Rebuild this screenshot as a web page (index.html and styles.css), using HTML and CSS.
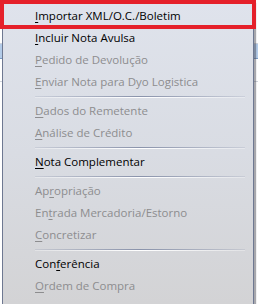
FILE: index.html
```html
<!DOCTYPE html>
<html>
<head>
<meta charset="utf-8">
<link rel="stylesheet" href="styles.css">
</head>
<body>
<div class="backdrop">
  <div class="row r1"></div>
  <div class="row r2"></div>
  <div class="row r3"></div>
</div>
<div class="menu">
  <div class="item"><span class="u">I</span>mportar XML/O.C./Boletim</div>
  <div class="item"><span class="u">I</span>ncluir Nota Avulsa</div>
  <div class="item off"><span class="u">P</span>edido de Devolução</div>
  <div class="item off"><span class="u">E</span>nviar Nota para Dyo Logistica</div>
  <div class="sep"></div>
  <div class="item off"><span class="u">D</span>ados do Remetente</div>
  <div class="item off"><span class="u">A</span>nálise de Crédito</div>
  <div class="sep"></div>
  <div class="item"><span class="u">N</span>ota Complementar</div>
  <div class="sep"></div>
  <div class="item off">Ap<span class="u">r</span>opriação</div>
  <div class="item off">En<span class="u">t</span>rada Mercadoria/Estorno</div>
  <div class="item off"><span class="u">C</span>oncretizar</div>
  <div class="sep"></div>
  <div class="item">Con<span class="u">f</span>erência</div>
  <div class="item off"><span class="u">O</span>rdem de Compra</div>
</div>
<div class="mark"></div>
</body>
</html>
```
FILE: styles.css
```css
html, body {
  margin: 0;
  padding: 0;
  background: #ffffff;
  width: 258px;
  height: 304px;
  overflow: hidden;
}
.backdrop {
  display: flex;
  flex-direction: column;
  width: 258px;
}
.row {
  border-bottom: 1px solid #d0d4dc;
}
.r1 { height: 43px; }
.r2 { height: 14px; background: #b3cbe8; border-bottom: 1px solid #7a9ac4; }
.r3 { height: 22px; }
.menu {
  position: absolute;
  left: 2px;
  top: 1px;
  width: 250px;
  height: 299px;
  box-sizing: content-box;
  border: 1px solid #6e7891;
  background: linear-gradient(to bottom, #dfe3ec 0%, #d9dce3 50%, #d3d3d5 100%);
  box-shadow: 2px 2px 1px rgba(60, 60, 70, 0.45);
  padding-top: 3px;
  font-family: "Open Sans", "Noto Sans", sans-serif;
  font-size: 11.5px;
}
.item {
  height: 22px;
  line-height: 22px;
  padding-left: 32px;
  color: #000000;
  white-space: nowrap;
}
.item.off {
  color: #8d8d8f;
}
.u {
  text-decoration: underline;
  text-underline-offset: 2px;
}
.sep {
  height: 2px;
  margin: 3px 8px 2px 32px;
  background:
    linear-gradient(to right, rgba(138,147,171,0.2), #8a93ab 50%, rgba(138,147,171,0.2)) top / 100% 1px no-repeat,
    linear-gradient(to right, rgba(255,255,255,0.3), #ffffff 50%, rgba(255,255,255,0.3)) bottom / 100% 1px no-repeat;
}
.mark {
  position: absolute;
  left: 0;
  top: 0;
  width: 256px;
  height: 29px;
  box-sizing: border-box;
  border: 4px solid #e5202a;
}
```
